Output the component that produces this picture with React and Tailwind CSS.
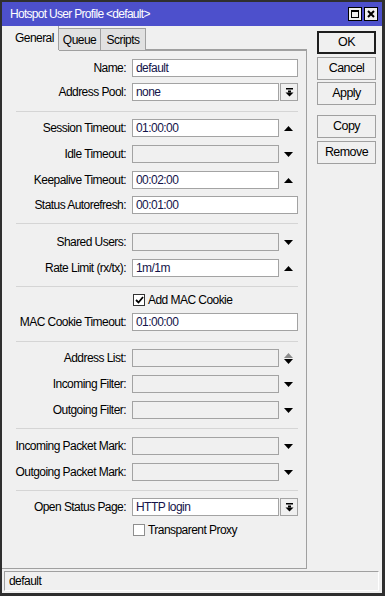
import React from "react"

const font = { fontFamily: '"Liberation Sans", Arial, sans-serif' }

function Tri({ up, color = "#000" }) {
  return (
    <svg width="9" height="5" viewBox="0 0 9 5">
      {up ? <polygon points="0,5 9,5 4.5,0" fill={color} /> : <polygon points="0,0 9,0 4.5,5" fill={color} />}
    </svg>
  )
}

function DropBtn() {
  return (
    <div className="ml-[1px] w-[18px] h-[18px] border border-[#a3a3a3] bg-[#f0f0f0] flex items-center justify-center">
      <svg width="9" height="9" viewBox="0 0 9 9">
        <rect x="1" y="0" width="7" height="1.5" fill="#000" />
        <rect x="3" y="2.5" width="3" height="2" fill="#000" />
        <polygon points="0.5,4.5 8.5,4.5 4.5,8.5" fill="#000" />
      </svg>
    </div>
  )
}

function Row({ label, value, mt, kind = "full", disabled }) {
  const wide = kind === "full"
  return (
    <div className={`flex items-center h-[18px] ${mt}`}>
      <div className="w-[124px] text-right whitespace-nowrap text-black">{label}</div>
      <div
        className={`ml-[6px] h-[18px] border border-[#a3a3a3] px-[3px] leading-[16px] text-[#14144a] whitespace-nowrap overflow-hidden ${
          wide ? "w-[166px]" : "w-[147px]"
        } ${disabled ? "bg-[#f0f0f0]" : "bg-white"}`}
      >
        {value}
      </div>
      {kind === "up" && (
        <div className="w-[19px] flex justify-center">
          <Tri up />
        </div>
      )}
      {kind === "down" && (
        <div className="w-[19px] flex justify-center">
          <Tri />
        </div>
      )}
      {kind === "both" && (
        <div className="w-[19px] flex flex-col items-center gap-[1px]">
          <Tri up color="#8c8c8c" />
          <Tri />
        </div>
      )}
      {kind === "drop" && <DropBtn />}
    </div>
  )
}

function Sep({ mt }) {
  return <div className={`ml-[14px] w-[282px] h-px bg-[#d5d5d5] ${mt}`}></div>
}

function Check({ label, checked, mt }) {
  return (
    <div className={`flex items-center h-[12px] ml-[131px] ${mt}`}>
      <div
        className={`w-[12px] h-[12px] bg-white border flex items-center justify-center ${
          checked ? "border-[#333]" : "border-[#8e8e8e]"
        }`}
      >
        {checked && (
          <svg width="9" height="8" viewBox="0 0 9 8">
            <polyline points="1,4 3.5,6.5 8,1" fill="none" stroke="#000" strokeWidth="1.8" />
          </svg>
        )}
      </div>
      <span className="ml-[3px] text-black whitespace-nowrap">{label}</span>
    </div>
  )
}

function Btn({ children, primary, mt }) {
  return (
    <div
      className={`w-[59px] h-[23px] flex items-center justify-center bg-[#f0f0f0] text-black text-[12.5px] ${mt} ${
        primary ? "border-2 border-[#1e1e1e]" : "border border-[#a0a0a0]"
      }`}
    >
      {children}
    </div>
  )
}

export default function App() {
  return (
    <div
      style={font}
      className="w-[385px] h-[596px] bg-[#f0f0f0] border-t-2 border-l-2 border-r-[3px] border-b-[3px] border-[#2f2f2f] flex flex-col text-[12px] tracking-[-0.55px] overflow-hidden"
    >
      {/* Title bar */}
      <div className="h-[24px] bg-[#4d50cc] flex items-center pl-[8px] pr-[4px]">
        <span className="text-white flex-1 whitespace-nowrap tracking-[-0.7px]">Hotspot User Profile &lt;default&gt;</span>
        <div className="w-[14px] h-[14px] bg-[#f0f0f0] border border-black flex items-center justify-center">
          <div className="w-[8px] h-[8px] border border-black border-t-2"></div>
        </div>
        <div className="ml-[2px] w-[14px] h-[14px] bg-[#f0f0f0] border border-black flex items-center justify-center">
          <svg width="8" height="8" viewBox="0 0 8 8">
            <path d="M1 1 L7 7 M7 1 L1 7" stroke="#000" strokeWidth="2" />
          </svg>
        </div>
      </div>

      <div className="flex flex-1 min-h-0">
        {/* Left: tabs + panel */}
        <div className="w-[305px] flex flex-col">
          <div className="h-[24px] flex items-end">
            <div className="w-[57px] h-[24px] bg-[#f0f0f0] border-r border-[#a0a0a0] flex items-center pl-[13px] text-black">
              General
            </div>
            <div className="w-[42px] h-[22px] bg-[#e1e1e1] border-t border-r border-[#a0a0a0] flex items-center justify-center text-black">
              Queue
            </div>
            <div className="w-[45px] h-[22px] bg-[#e1e1e1] border-t border-r border-[#a0a0a0] flex items-center justify-center text-black">
              Scripts
            </div>
            <div className="flex-1 border-b border-[#a0a0a0]"></div>
          </div>
          <div className="h-[519px] border-r border-b border-[#a0a0a0] flex flex-col relative">
            <div className="absolute left-[57px] right-0 top-0 h-px bg-[#a0a0a0]"></div>
            <Row mt="mt-[9px]" label="Name:" value="default" />
            <Row mt="mt-[6px]" label="Address Pool:" value="none" kind="drop" />
            <Sep mt="mt-[10px]" />
            <Row mt="mt-[7px]" label="Session Timeout:" value="01:00:00" kind="up" />
            <Row mt="mt-[8px]" label="Idle Timeout:" value="" kind="down" disabled />
            <Row mt="mt-[8px]" label="Keepalive Timeout:" value="00:02:00" kind="up" />
            <Row mt="mt-[7px]" label="Status Autorefresh:" value="00:01:00" />
            <Sep mt="mt-[9px]" />
            <Row mt="mt-[9px]" label="Shared Users:" value="" kind="down" disabled />
            <Row mt="mt-[8px]" label="Rate Limit (rx/tx):" value="1m/1m" kind="up" />
            <Sep mt="mt-[9px]" />
            <Check mt="mt-[7px]" label="Add MAC Cookie" checked />
            <Row mt="mt-[7px]" label="MAC Cookie Timeout:" value="01:00:00" />
            <Sep mt="mt-[10px]" />
            <Row mt="mt-[7px]" label="Address List:" value="" kind="both" disabled />
            <Row mt="mt-[8px]" label="Incoming Filter:" value="" kind="down" disabled />
            <Row mt="mt-[8px]" label="Outgoing Filter:" value="" kind="down" disabled />
            <Sep mt="mt-[9px]" />
            <Row mt="mt-[8px]" label="Incoming Packet Mark:" value="" kind="down" disabled />
            <Row mt="mt-[8px]" label="Outgoing Packet Mark:" value="" kind="down" disabled />
            <Sep mt="mt-[9px]" />
            <Row mt="mt-[7px]" label="Open Status Page:" value="HTTP login" kind="drop" />
            <Check mt="mt-[8px]" label="Transparent Proxy" />
          </div>
        </div>

        {/* Right: buttons */}
        <div className="flex flex-col ml-[10px] pt-[5px]">
          <Btn primary>OK</Btn>
          <Btn mt="mt-[3px]">Cancel</Btn>
          <Btn mt="mt-[2px]">Apply</Btn>
          <Btn mt="mt-[10px]">Copy</Btn>
          <Btn mt="mt-[3px]">Remove</Btn>
        </div>
      </div>

      {/* Status bar */}
      <div className="mt-[2px] mb-[2px] ml-[2px] w-[375px] h-[20px] border-t border-l border-[#a0a0a0] border-r border-b border-r-white border-b-white flex items-center pl-[4px] text-black">
        default
      </div>
    </div>
  )
}
